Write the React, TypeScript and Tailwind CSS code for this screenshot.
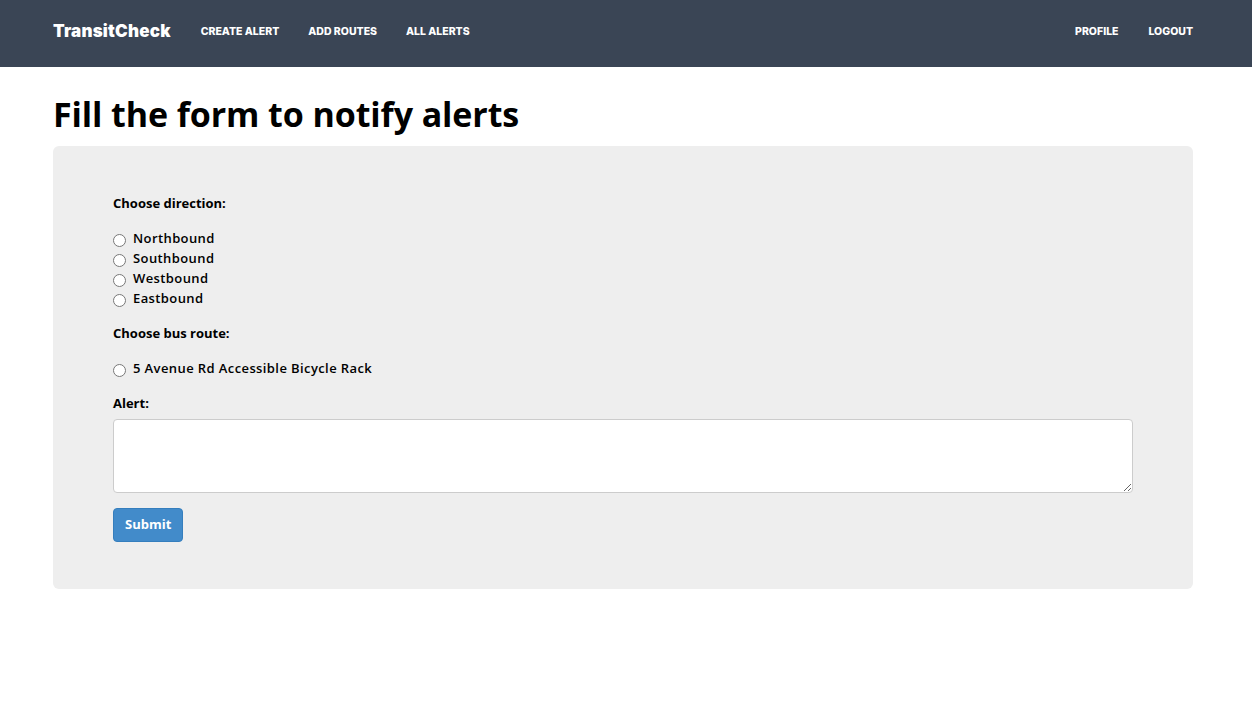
import React from 'react';

const navLinks = ['Create Alert', 'Add Routes', 'All Alerts'];
const directions = ['Northbound', 'Southbound', 'Westbound', 'Eastbound'];

function Radio({ label, name }: { label: string; name: string }) {
  return (
    <label className="flex items-center h-5 text-[13px] font-semibold tracking-[0.4px] text-black">
      <input type="radio" name={name} className="w-[13px] h-[13px] mr-[7px] mt-[3px] accent-gray-400" />
      {label}
    </label>
  );
}

export default function App() {
  return (
    <div className="min-h-screen bg-white font-['Open_Sans',sans-serif]">
      {/* Navbar */}
      <nav className="h-[67px] bg-[#3a4555] flex items-center pl-[53px] pr-[59px] pb-[4px] text-white font-['Inter',sans-serif]">
        <a href="#" className="text-[17px] font-black tracking-[0.2px] mr-[30px]">
          TransitCheck
        </a>
        <div className="flex items-center gap-[29px]">
          {navLinks.map((l) => (
            <a key={l} href="#" className="text-[10.5px] font-extrabold uppercase">
              {l}
            </a>
          ))}
        </div>
        <div className="ml-auto flex items-center gap-[30px]">
          <a href="#" className="text-[10.5px] font-extrabold uppercase">Profile</a>
          <a href="#" className="text-[10.5px] font-extrabold uppercase">Logout</a>
        </div>
      </nav>

      <div className="w-[1140px] ml-[53px]">
        <h1 className="text-[34px] font-bold tracking-[-0.1px] text-black leading-none pt-[30px] pb-[15px]">
          Fill the form to notify alerts
        </h1>

        {/* Form panel */}
        <div className="bg-[#eeeeee] rounded-md px-[60px] pt-[48px] pb-[47px]">
          <p className="text-[13px] font-bold text-black mb-[15px]">Choose direction:</p>
          <div className="flex flex-col">
            {directions.map((d) => (
              <Radio key={d} label={d} name="direction" />
            ))}
          </div>

          <p className="text-[13px] font-bold text-black mt-[15px] mb-[16px]">Choose bus route:</p>
          <Radio label="5 Avenue Rd Accessible Bicycle Rack" name="route" />

          <p className="text-[13px] font-bold text-black mt-[15px] mb-[5px]">Alert:</p>
          <textarea className="block w-[1020px] h-[74px] bg-white border border-[#cccccc] rounded-[4px]" />

          <button className="mt-[15px] h-[34px] px-[11px] bg-[#428bca] border border-[#357ebd] rounded-[4px] text-white text-[13px] font-bold">
            Submit
          </button>
        </div>
      </div>
    </div>
  );
}
